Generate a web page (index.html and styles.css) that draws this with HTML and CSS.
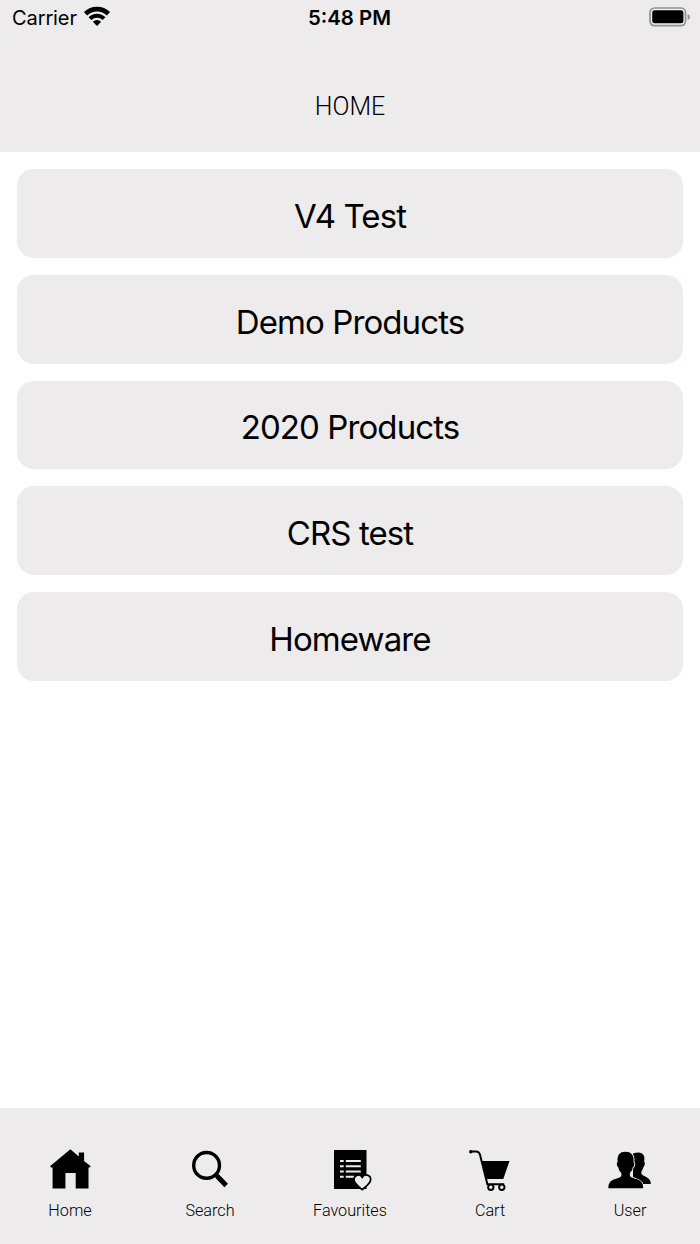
FILE: index.html
```html
<!DOCTYPE html>
<html lang="en">
<head>
    <meta charset="UTF-8">
    <meta name="viewport" content="width=device-width, initial-scale=1.0">
    <title>Home</title>
    <link rel="stylesheet" href="styles.css">
</head>
<body>

    <header class="header">
        <div class="status-bar">
            <div class="carrier">
                <span>Carrier</span>
                <svg class="wifi" width="26" height="20" viewBox="0 0 26 20">
                    <path d="M1.6 7.8a16.2 16.2 0 0 1 22.8 0" fill="none" stroke="#000" stroke-width="4.7"/>
                    <path d="M6 12.6a9.9 9.9 0 0 1 14 0" fill="none" stroke="#000" stroke-width="4.1"/>
                    <path d="M13 20l-4.1-4.3a5.8 5.8 0 0 1 8.2 0z"/>
                </svg>
            </div>
            <span class="time">5:48 PM</span>
            <svg class="battery" width="42" height="20" viewBox="0 0 42 20">
                <rect x="1" y="1" width="35.5" height="17.6" rx="4.5" fill="#f3f2f3" stroke="#929192" stroke-width="1.7"/>
                <rect x="3.2" y="3.3" width="31.2" height="13" rx="2.4"/>
                <path d="M38.6 7q2.4 1 2.4 3t-2.4 3z" fill="#929192"/>
            </svg>
        </div>
        <h1>HOME</h1>
    </header>

    <main class="categories">
        <button class="category">V4 Test</button>
        <button class="category">Demo Products</button>
        <button class="category">2020 Products</button>
        <button class="category">CRS test</button>
        <button class="category">Homeware</button>
    </main>

    <nav class="tabs">
        <a class="tab">
            <svg width="44" height="44" viewBox="0 0 44 44">
                <path d="M22.4 2.3L30.8 9.4V5.6h5.3v8.3l6.6 5.4-1.2 1.2h-1v21H27.7V26H17.4v15.5H4.6v-21H3.2L2 19.3z"/>
            </svg>
            <span>Home</span>
        </a>
        <a class="tab">
            <svg width="44" height="44" viewBox="0 0 44 44">
                <circle cx="18.6" cy="18.4" r="12.9" fill="none" stroke="#000" stroke-width="3.4"/>
                <path d="M27.3 27.2l3 2.7" stroke="#000" stroke-width="4"/>
                <path d="M29 29l9.2 9.4" stroke="#000" stroke-width="5"/>
            </svg>
            <span>Search</span>
        </a>
        <a class="tab">
            <svg width="44" height="44" viewBox="0 0 44 44">
                <path d="M6 3h32.5v39H6z"/>
                <path d="M12 14h3.7M12 19.3h3.7M12 24.6h3.7M12 29.7h3.7M17.8 14h15M17.8 19.3h15M17.8 24.6h15M17.8 29.7h8.5" stroke="#edebec" stroke-width="2"/>
                <path d="M34.2 42.6c-3.5-2.9-8.2-6.4-8.2-10.2 0-4.6 6-6.1 8.2-2.1 2.2-4 8.5-2.5 8.5 2.1 0 3.8-5 7.3-8.5 10.2z" fill="#edebec" stroke="#000" stroke-width="1.7"/>
            </svg>
            <span>Favourites</span>
        </a>
        <a class="tab">
            <svg width="44" height="44" viewBox="0 0 44 44">
                <path d="M2.4 4.5H8q3 0 4 3.2l7.4 29.5h16.8" fill="none" stroke="#000" stroke-width="2"/>
                <circle cx="2.8" cy="4.8" r="1.8"/>
                <path d="M13.8 14h27.7l-6.2 18H18.6z"/>
                <circle cx="22.8" cy="40.3" r="2.7" fill="#edebec" stroke="#000" stroke-width="1.9"/>
                <circle cx="33.8" cy="40.3" r="2.7" fill="#edebec" stroke="#000" stroke-width="1.9"/>
            </svg>
            <span>Cart</span>
        </a>
        <a class="tab">
            <svg width="44" height="44" viewBox="0 0 44 44">
                <path d="M25 6.6q8-3 10.9 2.1c.9 1.8.3 4.2.3 6 1.3 1.4.3 4.5-.8 5.4-.8 3.4-2.1 4-2.1 6 0 4 9.6 3 9.6 10.8H25z"/>
                <path d="M.4 41.2c0-5.5 2.2-7.9 7-9.2 4.4-1.3 7.2-1.8 5.7-6.4-1.6-1.4-2.2-2.6-2.7-5.2-1.6-1.2-2.2-4.2-.8-5.5-.7-7 2-10.2 7.700-10.200s9.200 3.200 8.200 10.200c1.500 1.300.8 4.400-.8 5.600-.5 2.400-1 3.700-2.500 5.100-1.500 4.700 1.400 5.100 5.800 6.400 4.800 1.300 7.200 3.700 7.200 9.200z" stroke="#edebec" stroke-width="1.8" paint-order="stroke"/>
            </svg>
            <span>User</span>
        </a>
    </nav>

</body>
</html>
```
FILE: styles.css
```css
* {
    margin: 0;
    padding: 0;
    box-sizing: border-box;
}

body {
    font-family: Inter, sans-serif;
    background-color: #fff;
    color: #000;
    display: flex;
    flex-direction: column;
    height: 100vh;
}

.header {
    height: 152px;
    background-color: #edebec;
}

.status-bar {
    display: grid;
    grid-template-columns: 1fr auto 1fr;
    align-items: center;
    height: 36px;
    padding: 0 9px 0 12px;
    font-size: 20px;
}

.carrier {
    display: flex;
    align-items: center;
    gap: 7px;
    letter-spacing: -0.1px;
}

.wifi {
    margin-top: -4px;
}

.time {
    margin: -2px 4px 0 0;
    font-size: 20.4px;
    font-weight: 600;
}

.battery {
    justify-self: end;
    margin-top: -3px;
}

h1 {
    margin-top: 56px;
    font-family: Roboto, sans-serif;
    font-size: 25px;
    font-weight: 300;
    line-height: 30px;
    text-align: center;
}

.categories {
    flex: 1;
    display: flex;
    flex-direction: column;
    gap: 17px;
    padding: 17px;
}

.category {
    height: 88.75px;
    padding-top: 5px;
    background-color: #edebec;
    border: none;
    border-radius: 17px;
    color: #000;
    font-family: inherit;
    font-size: 33px;
    letter-spacing: -0.9px;
    cursor: pointer;
}

.tabs {
    display: flex;
    height: 136px;
    padding-top: 39px;
    background-color: #edebec;
}

.tab {
    flex: 1;
    display: flex;
    flex-direction: column;
    align-items: center;
    gap: 10px;
    font-family: Roboto, sans-serif;
    font-size: 16.2px;
    font-weight: 300;
    line-height: 20px;
}
```
